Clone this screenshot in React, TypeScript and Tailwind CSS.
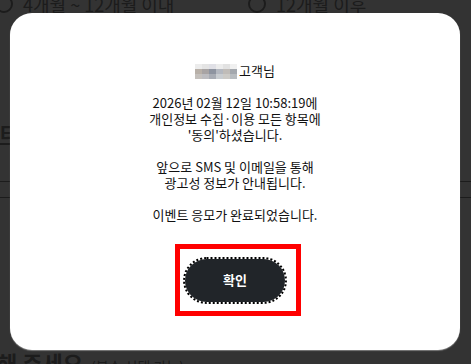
import React from 'react';

const mosaic = [
  ['bg-[#ececec]', 'bg-[#e4e4e4]', 'bg-[#e0e0e6]', 'bg-[#ececec]', 'bg-[#e2e2e2]', 'bg-[#f0f0f0]'],
  ['bg-[#b8b0a8]', 'bg-[#a8a4a4]', 'bg-[#8e94a0]', 'bg-[#b4b8c0]', 'bg-[#c0bcb8]', 'bg-[#a4a8ae]'],
  ['bg-[#c4c0bc]', 'bg-[#bcbcc0]', 'bg-[#a8acb4]', 'bg-[#c8ccd0]', 'bg-[#cccac6]', 'bg-[#b8bcc0]'],
];

function BlurredName() {
  return (
    <span className="grid grid-cols-[repeat(6,7px)] grid-rows-[repeat(3,5px)] mr-[2px]">
      {mosaic.flat().map((c, i) => (
        <span key={i} className={c} />
      ))}
    </span>
  );
}

function Radio({ label }: { label: string }) {
  return (
    <div className="flex items-center gap-[10px]">
      <span className="w-[18px] h-[18px] rounded-full border-2 border-[#8a8a8a] shrink-0" />
      <span className="text-[18px] leading-[26px] text-[#8a8a8a]">{label}</span>
    </div>
  );
}

export default function App() {
  return (
    <div className="relative w-[471px] h-[364px] overflow-hidden bg-white font-['Noto_Sans_CJK_KR',sans-serif]">
      {/* page behind the dialog */}
      <div className="-mt-[9px]">
        <div className="grid grid-cols-[253px_1fr] -ml-[5px]">
          <Radio label="4개월 ~ 12개월 이내" />
          <Radio label="12개월 이후" />
        </div>
        <div className="mt-[108px] w-[60px] border-b-2 border-[#8a8a8a] text-[20px] leading-[18px] font-bold text-[#8a8a8a]">
          타
        </div>
        <div className="mt-[36px] h-px bg-[#8a8a8a]" />
        <div className="mt-[15px] h-px bg-[#8a8a8a]" />
        <div className="mt-[150px] flex items-baseline gap-[8px] -ml-[3px] text-[#8a8a8a]">
          <span className="text-[22px] leading-[28px] font-bold">해 주세요</span>
          <span className="text-[14px]">(복수 선택 가능)</span>
        </div>
      </div>

      {/* backdrop */}
      <div className="absolute inset-0 bg-black/80" />

      {/* dialog */}
      <div className="absolute left-[10px] top-[13px] w-[450px] h-[337px] rounded-[22px] bg-white shadow-[0_1px_1px_rgba(255,255,255,0.35)] pt-[50px]">
        <div className="text-center text-[13px] leading-[16px] text-[#111]">
          <div className="h-[16px] flex items-center justify-center">
            <BlurredName />
            <span>고객님</span>
          </div>
          <p className="h-[16px]" />
          <p>2026년 02월 12일 10:58:19에</p>
          <p>개인정보 수집·이용 모든 항목에</p>
          <p>'동의'하셨습니다.</p>
          <p className="h-[16px]" />
          <p>앞으로 SMS 및 이메일을 통해</p>
          <p>광고성 정보가 안내됩니다.</p>
          <p className="h-[16px]" />
          <p>이벤트 응모가 완료되었습니다.</p>
        </div>

        <div className="mt-[21px] ml-[165px] w-[126px] h-[72px] border-[5px] border-[#ff0000] flex items-center pl-[5px]">
          <button className="w-[100px] h-[43px] rounded-full bg-[#212529] text-white text-[13px] font-bold outline-2 outline-dotted outline-black">
            확인
          </button>
        </div>
      </div>
    </div>
  );
}
